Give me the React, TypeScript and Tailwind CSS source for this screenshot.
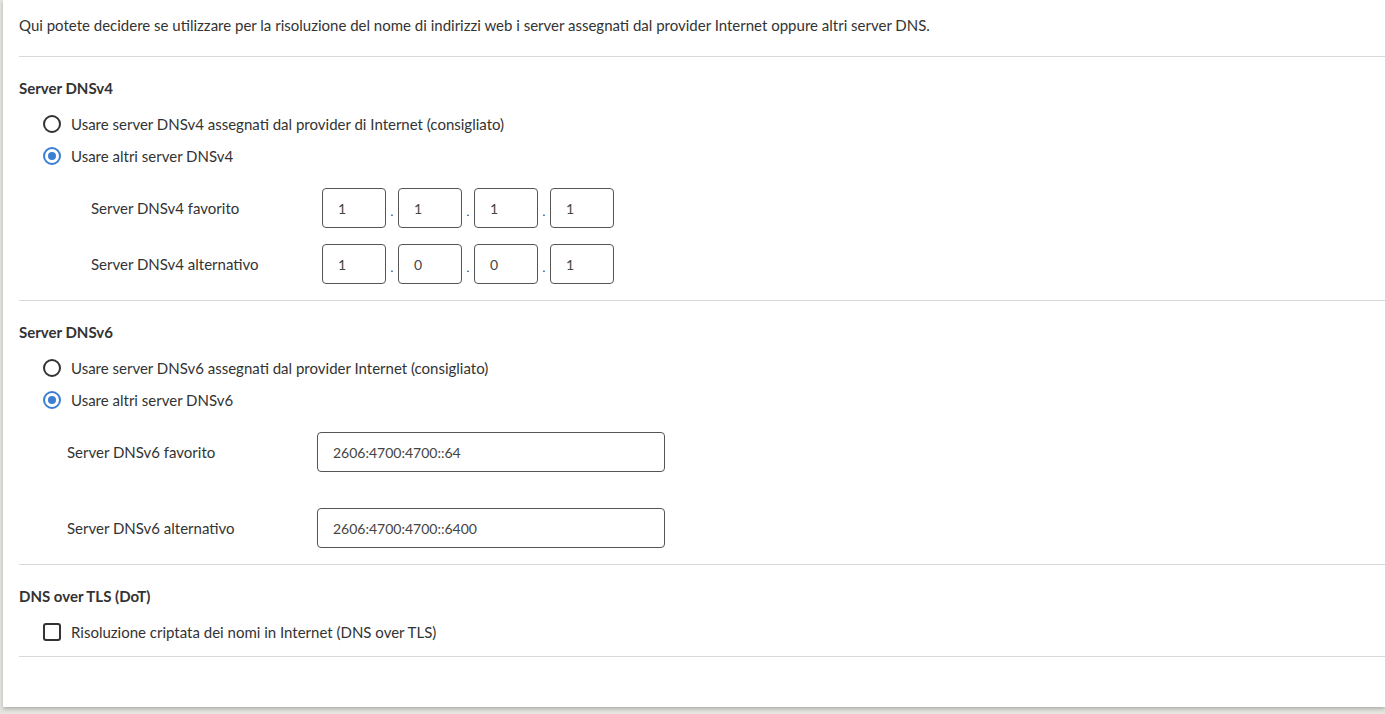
import React, { useState } from "react";

const font = { fontFamily: "Lato, 'Open Sans', sans-serif" };

function Radio({ checked, label, onChange }: { checked: boolean; label: string; onChange: () => void }) {
  return (
    <label className="flex items-center h-[32px] pl-[24px] cursor-pointer" onClick={onChange}>
      <span
        className={
          checked
            ? "flex items-center justify-center w-[18px] h-[18px] rounded-full border-2 border-[#3b7fd4]"
            : "flex items-center justify-center w-[18px] h-[18px] rounded-full border-2 border-[#333]"
        }
      >
        {checked && <span className="w-[8px] h-[8px] rounded-full bg-[#3b7fd4]" />}
      </span>
      <span className="ml-[10px] text-[15px] text-[#333]">{label}</span>
    </label>
  );
}

function IpRow({ label, values }: { label: string; values: string[] }) {
  return (
    <div className="flex items-center h-[40px] pl-[72px]">
      <div className="w-[231px] text-[15px] text-[#333]">{label}</div>
      <div className="flex items-center">
        {values.map((v, i) => (
          <React.Fragment key={i}>
            {i > 0 && <span className="w-[12px] text-center text-[12px] text-[#333] pt-[8px]">.</span>}
            <div className="w-[64px] h-[40px] border border-[#555] rounded-[4px] flex items-center pl-[15px] text-[14px] text-[#444]">
              {v}
            </div>
          </React.Fragment>
        ))}
      </div>
    </div>
  );
}

function V6Row({ label, value }: { label: string; value: string }) {
  return (
    <div className="flex items-center h-[40px] pl-[48px]">
      <div className="w-[250px] text-[15px] text-[#333]">{label}</div>
      <div className="w-[348px] h-[40px] border border-[#555] rounded-[4px] flex items-center pl-[15px] text-[14px] text-[#444]">
        {value}
      </div>
    </div>
  );
}

export default function App() {
  const [v4, setV4] = useState("custom");
  const [v6, setV6] = useState("custom");

  return (
    <div className="w-[1385px] h-[714px] bg-[#e6e6e1] pl-[3px] overflow-hidden" style={font}>
      <div className="h-[707px] bg-white shadow-[0_2px_4px_rgba(0,0,0,0.25)] pl-[16px]">
        <div className="h-[57px] flex items-center pb-[6px] text-[15px] text-[#333] border-b border-[#d9d9d9]">
          Qui potete decidere se utilizzare per la risoluzione del nome di indirizzi web i server assegnati dal provider Internet oppure altri server DNS.
        </div>

        <div className="border-b border-[#d9d9d9] pb-[16px]">
          <div className="h-[51px] flex items-center pt-[11px] text-[15px] font-bold text-[#333]">Server DNSv4</div>
          <Radio checked={v4 === "isp"} onChange={() => setV4("isp")} label="Usare server DNSv4 assegnati dal provider di Internet (consigliato)" />
          <Radio checked={v4 === "custom"} onChange={() => setV4("custom")} label="Usare altri server DNSv4" />
          <div className="flex flex-col gap-[16px] mt-[16px]">
            <IpRow label="Server DNSv4 favorito" values={["1", "1", "1", "1"]} />
            <IpRow label="Server DNSv4 alternativo" values={["1", "0", "0", "1"]} />
          </div>
        </div>

        <div className="border-b border-[#d9d9d9] pb-[16px]">
          <div className="h-[51px] flex items-center pt-[11px] text-[15px] font-bold text-[#333]">Server DNSv6</div>
          <Radio checked={v6 === "isp"} onChange={() => setV6("isp")} label="Usare server DNSv6 assegnati dal provider Internet (consigliato)" />
          <Radio checked={v6 === "custom"} onChange={() => setV6("custom")} label="Usare altri server DNSv6" />
          <div className="flex flex-col gap-[36px] mt-[16px]">
            <V6Row label="Server DNSv6 favorito" value="2606:4700:4700::64" />
            <V6Row label="Server DNSv6 alternativo" value="2606:4700:4700::6400" />
          </div>
        </div>

        <div className="border-b border-[#d9d9d9] pb-[8px]">
          <div className="h-[51px] flex items-center pt-[11px] text-[15px] font-bold text-[#333]">DNS over TLS (DoT)</div>
          <label className="flex items-center h-[32px] pl-[24px]">
            <span className="w-[18px] h-[18px] rounded-[3px] border-2 border-[#333]" />
            <span className="ml-[10px] text-[15px] text-[#333]">Risoluzione criptata dei nomi in Internet (DNS over TLS)</span>
          </label>
        </div>
      </div>
    </div>
  );
}
